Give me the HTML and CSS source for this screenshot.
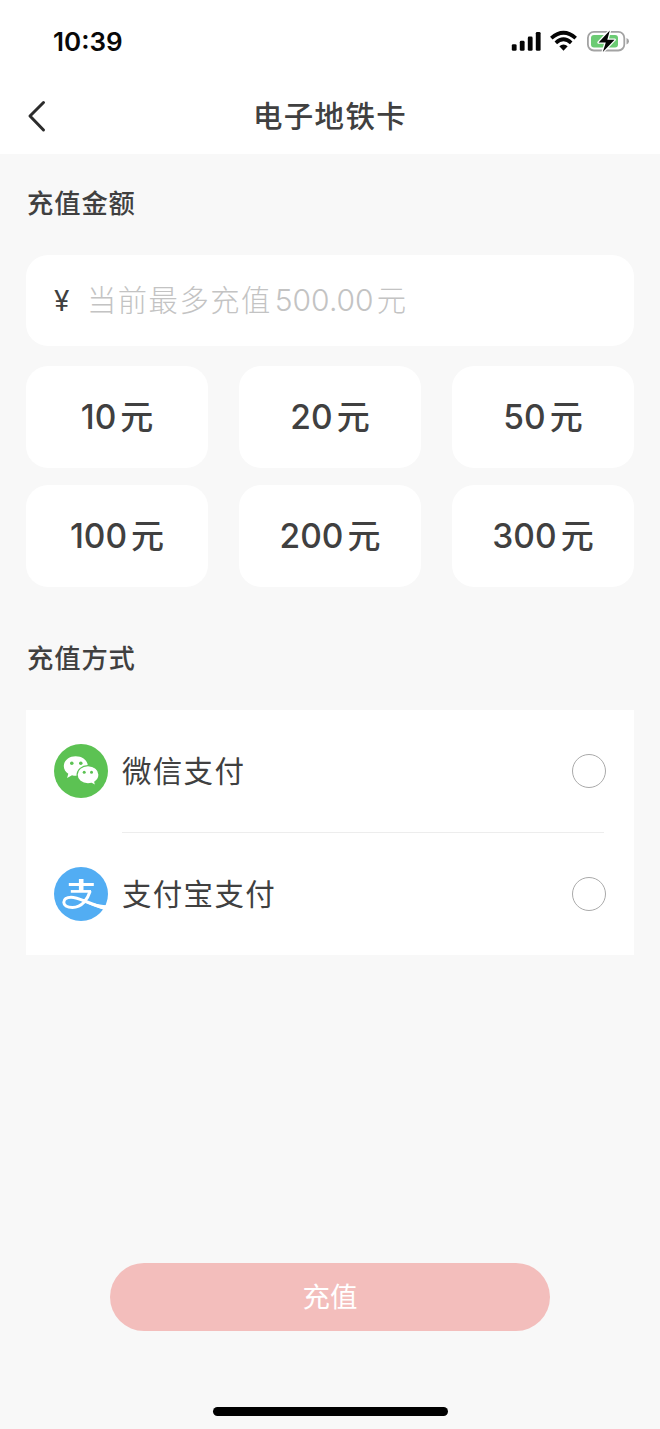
FILE: index.html
```html
<!DOCTYPE html>
<html lang="zh-CN">
<head>
<meta charset="utf-8">
<title>电子地铁卡</title>
<link rel="stylesheet" href="styles.css">
</head>
<body>
<div class="screen">
  <header class="top">
    <div class="status">
      <span class="time">10:39</span>
      <svg class="status-icons" width="120" height="26" viewBox="0 0 120 26">
        <g fill="#050505">
          <rect x="1.8" y="15.2" width="4.8" height="6.6" rx="1.4"/>
          <rect x="9.8" y="11.8" width="4.8" height="10" rx="1.4"/>
          <rect x="17.8" y="7.6" width="4.8" height="14.2" rx="1.4"/>
          <rect x="25.8" y="2.9" width="4.8" height="18.9" rx="1.4"/>
        </g>
        <g fill="none" stroke="#050505" stroke-width="3.7">
          <path d="M41.3 9.2Q53.5 -1.6 65.7 9.2"/>
          <path d="M45.8 13.8Q53.5 6.8 61.2 13.8"/>
        </g>
        <path d="M49.3 17.3Q53.5 13.8 57.7 17.3L53.5 21.7Z" fill="#050505"/>
        <rect x="77.9" y="2.9" width="36.4" height="18.6" rx="6" fill="#fff" stroke="#a3a3a3" stroke-width="1.8"/>
        <rect x="81" y="6" width="27" height="12.4" rx="3" fill="#6bcb73"/>
        <path d="M116.5 9Q119 10 119 12.2T116.5 15.5Z" fill="#a3a3a3"/>
        <path d="M99.8 1.6L88.6 13.5H95.8L92.8 22.9L104.6 10.7H97.3Z" fill="#050505" stroke="#fff" stroke-width="2.6" paint-order="stroke" stroke-linejoin="round"/>
      </svg>
    </div>
    <div class="nav">
      <svg class="back" width="24" height="36" viewBox="0 0 24 36"><path d="M17.5 4.5L4 18L17.5 32" fill="none" stroke="#2c2c2c" stroke-width="3" stroke-linecap="round" stroke-linejoin="round"/></svg>
      <h1 class="title">电子地铁卡</h1>
    </div>
  </header>
  <main class="content">
    <h2 class="section-title">充值金额</h2>
    <div class="amount-field">
      <span class="yen">¥</span>
      <span class="placeholder">当前最多充值<span class="limit">500.00</span>元</span>
    </div>
    <div class="amounts">
      <div class="amount"><span class="num">10</span><span class="unit">元</span></div>
      <div class="amount"><span class="num">20</span><span class="unit">元</span></div>
      <div class="amount"><span class="num">50</span><span class="unit">元</span></div>
      <div class="amount"><span class="num">100</span><span class="unit">元</span></div>
      <div class="amount"><span class="num">200</span><span class="unit">元</span></div>
      <div class="amount"><span class="num">300</span><span class="unit">元</span></div>
    </div>
    <h2 class="section-title methods-title">充值方式</h2>
    <div class="methods">
      <div class="method">
        <svg class="logo" width="54" height="54" viewBox="0 0 54 54">
          <circle cx="27" cy="27" r="27" fill="#5cc253"/>
          <path d="M21.6 12.2C14.8 12.2 9.8 16.6 9.8 22C9.8 25.2 11.5 28 14.3 29.8L13.1 34L18 31.3Q19.8 31.8 21.8 31.8C28.8 31.8 33.8 27.5 33.8 22C33.8 16.6 28.8 12.2 21.6 12.2Z" fill="#fff"/>
          <circle cx="17.8" cy="19.3" r="1.8" fill="#5cc253"/><circle cx="26.8" cy="19.3" r="1.8" fill="#5cc253"/>
          <path d="M34 21.7C27.8 21.7 23.1 25.7 23.1 30.8C23.1 35.9 27.8 39.9 34 39.9Q35.9 39.9 37.6 39.4L41.8 41.8L40.8 37.9C43.4 36.2 45 33.7 45 30.8C45 25.7 40.2 21.7 34 21.7Z" fill="#fff" stroke="#5cc253" stroke-width="1.2"/>
          <circle cx="30.2" cy="28.3" r="1.5" fill="#5cc253"/><circle cx="37.5" cy="28.3" r="1.5" fill="#5cc253"/>
        </svg>
        <span class="name">微信支付</span>
        <span class="radio"></span>
      </div>
      <div class="divider"></div>
      <div class="method">
        <svg class="logo" width="54" height="54" viewBox="0 0 54 54">
          <circle cx="27" cy="27" r="27" fill="#52adf3"/>
          <g fill="none" stroke="#fff">
            <path d="M14.8 17.5H39.8" stroke-width="3"/>
            <path d="M16.8 24.4H37" stroke-width="2.7"/>
            <path d="M27.2 12V24.8" stroke-width="4.6"/>
            <path d="M36.2 24C33.8 32 28 40.5 18.5 40.5C12.8 40.5 9.8 38.2 9.8 35.3C9.8 32.2 12.7 30.2 17 30.2C24.5 30.2 33 36 50 41" stroke-width="3"/>
          </g>
          <path d="M29 33C36 35.7 43 37.5 53 38.3L50.8 42.9C43 40.7 35 37.4 28 34Z" fill="#fff"/>
        </svg>
        <span class="name">支付宝支付</span>
        <span class="radio"></span>
      </div>
    </div>
  </main>
  <footer class="bottom">
    <div class="submit">充值</div>
    <div class="home-bar"></div>
  </footer>
</div>
</body>
</html>
```
FILE: styles.css
```css
* { box-sizing: border-box; }
body {
  margin: 0;
  background: #f8f8f8;
  color: #404040;
  font-family: Inter, "Noto Sans CJK SC", sans-serif;
}
.screen {
  display: flex;
  flex-direction: column;
  width: 660px;
  height: 1429px;
}
.top { height: 154px; background: #fff; }
.status {
  display: flex;
  align-items: center;
  justify-content: space-between;
  height: 84px;
  padding: 0 30px 0 53px;
}
.time {
  color: #080808;
  font-size: 26px;
  font-weight: 600;
  line-height: 32px;
}
.nav {
  display: grid;
  grid-template-columns: 54px 1fr 54px;
  align-items: center;
  height: 64px;
}
.back { margin-left: 26px; }
.title {
  margin: 0;
  text-align: center;
  font-size: 29.5px;
  font-weight: 500;
  line-height: 40px;
  letter-spacing: 1.3px;
}
.content { padding: 30px 26px 0; }
.section-title {
  margin: 0 0 0 1px;
  font-size: 26.3px;
  font-weight: 500;
  line-height: 40px;
  letter-spacing: 0.9px;
}
.amount-field {
  display: flex;
  align-items: center;
  height: 91px;
  margin-top: 31px;
  padding-left: 28px;
  border-radius: 22px;
  background: #fff;
}
.yen { width: 33px; font-size: 28px; line-height: 40px; }
.placeholder {
  color: #c3c3c3;
  font-size: 29.3px;
  font-weight: 300;
  line-height: 40px;
  letter-spacing: 1.5px;
}
.limit { margin: 0 3px; font-size: 30px; letter-spacing: 0; }
.amounts {
  display: grid;
  grid-template-columns: repeat(3, 182px);
  grid-auto-rows: 102px;
  justify-content: space-between;
  row-gap: 17px;
  margin-top: 20px;
}
.amount {
  display: flex;
  align-items: center;
  justify-content: center;
  gap: 4px;
  border-radius: 22px;
  background: #fff;
  font-weight: 500;
  line-height: 44px;
}
.num { font-size: 33.5px; }
.unit { font-size: 33px; }
.methods-title { margin-top: 52px; }
.methods { margin-top: 31px; height: 245px; background: #fff; }
.method {
  display: flex;
  align-items: center;
  height: 122px;
  padding: 0 28px;
}
.name {
  flex: 1;
  margin-left: 14px;
  font-size: 29.5px;
  line-height: 40px;
  letter-spacing: 1.3px;
}
.radio {
  width: 34px;
  height: 34px;
  border: 1.5px solid #aaa;
  border-radius: 50%;
}
.divider { height: 1px; margin: 0 30px 0 96px; background: #ededed; }
.bottom {
  display: flex;
  flex-direction: column;
  align-items: center;
  margin-top: auto;
  padding-bottom: 13px;
}
.submit {
  width: 440px;
  height: 68px;
  border-radius: 34px;
  background: #f3bebc;
  color: #fff;
  font-size: 27.5px;
  line-height: 68px;
  text-align: center;
}
.home-bar {
  width: 235px;
  height: 9px;
  margin-top: 76px;
  border-radius: 5px;
  background: #000;
}
```
